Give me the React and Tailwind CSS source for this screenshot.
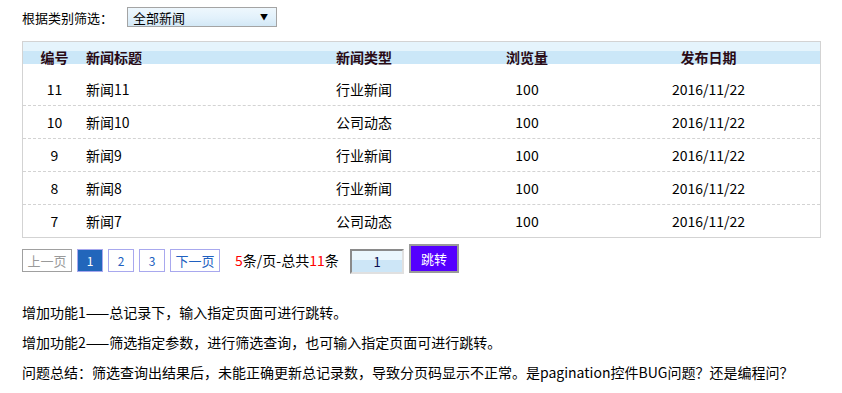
import React from "react";

const rows = [
  { id: 11, title: "新闻11", type: "行业新闻" },
  { id: 10, title: "新闻10", type: "公司动态" },
  { id: 9, title: "新闻9", type: "行业新闻" },
  { id: 8, title: "新闻8", type: "行业新闻" },
  { id: 7, title: "新闻7", type: "公司动态" },
];

const font = { fontFamily: '"Noto Sans CJK SC", sans-serif' };

export default function App() {
  return (
    <div className="w-[842px] h-[393px] bg-white text-black pl-[22px] pt-[7px] overflow-hidden" style={font}>
      <div className="flex items-center h-[20px]">
        <span className="w-[105px] text-[13px] leading-none">根据类别筛选：</span>
        <div className="w-[150px] h-[20px] border border-[#a4a4a4] bg-[linear-gradient(to_bottom,#eef7fd_0%,#e2f1fb_55%,#d3e8f6_100%)] flex items-center justify-between pl-[5px] pr-[8px]">
          <span className="text-[13px] leading-none">全部新闻</span>
          <span className="text-[8px] leading-none">▼</span>
        </div>
      </div>

      <div className="mt-[14px] w-[799px] border border-[#d3d3d3]">
        <div className="grid grid-cols-[63px_250px_121px_140px_1fr] h-[31px] items-center text-[14px] font-bold text-[#2a0a14] bg-[linear-gradient(to_bottom,#e5f4fc_0px,#e5f4fc_9px,#cbe7f8_9px,#cbe7f8_22px,#ffffff_22px)]">
          <div className="text-center">编号</div>
          <div>新闻标题</div>
          <div>新闻类型</div>
          <div className="text-center">浏览量</div>
          <div className="text-center">发布日期</div>
        </div>
        {rows.map((r, i) => (
          <div
            key={r.id}
            className={
              "grid grid-cols-[63px_250px_121px_140px_1fr] items-center text-[14px] " +
              (i < rows.length - 1 ? "h-[33px] border-b border-dashed border-[#d3d3d3]" : "h-[32px]")
            }
          >
            <div className="text-center">{r.id}</div>
            <div>{r.title}</div>
            <div>{r.type}</div>
            <div className="text-center">100</div>
            <div className="text-center">2016/11/22</div>
          </div>
        ))}
      </div>

      <div className="mt-[6px] flex items-start">
        <div className="mt-[5px] w-[50px] h-[23px] border border-[#a0a0a0] text-[#9a9a9a] text-[13px] flex items-center justify-center">上一页</div>
        <div className="mt-[5px] ml-[5px] w-[26px] h-[23px] border border-[#a8a8ee] bg-[#2266bb] text-white text-[12px] flex items-center justify-center">1</div>
        <div className="mt-[5px] ml-[5px] w-[26px] h-[23px] border border-[#a8a8ee] text-[#2060c0] text-[12px] flex items-center justify-center">2</div>
        <div className="mt-[5px] ml-[5px] w-[26px] h-[23px] border border-[#a8a8ee] text-[#2060c0] text-[12px] flex items-center justify-center">3</div>
        <div className="mt-[5px] ml-[5px] w-[50px] h-[23px] border border-[#a8a8ee] text-[#2060c0] text-[13px] flex items-center justify-center">下一页</div>
        <div className="mt-[5px] ml-[15px] w-[115px] h-[23px] flex items-center text-[14px] whitespace-nowrap">
          <span className="text-[#ff0000]">5</span>条/页-总共<span className="text-[#ff0000]">11</span>条
        </div>
        <div className="mt-[5px] w-[54px] h-[25px] border-2 border-t-[#8a8a8a] border-l-[#8a8a8a] border-b-[#e0e0e0] border-r-[#e0e0e0] bg-[linear-gradient(to_bottom,#eaf6fd_0%,#eaf6fd_45%,#cde6f7_45%,#cde6f7_100%)] flex items-center justify-center text-[13px] text-[#0a0a50]">1</div>
        <div className="ml-[5px] w-[50px] h-[29px] border-2 border-[#9a9a9a] bg-[#5500ff] text-white text-[13px] flex items-center justify-center">跳转</div>
      </div>

      <div className="mt-[23px] text-[14px] leading-[30px] whitespace-nowrap">
        <p>增加功能1——总记录下，输入指定页面可进行跳转。</p>
        <p>增加功能2——筛选指定参数，进行筛选查询，也可输入指定页面可进行跳转。</p>
        <p>问题总结：筛选查询出结果后，未能正确更新总记录数，导致分页码显示不正常。是pagination控件BUG问题？还是编程问？</p>
      </div>
    </div>
  );
}
